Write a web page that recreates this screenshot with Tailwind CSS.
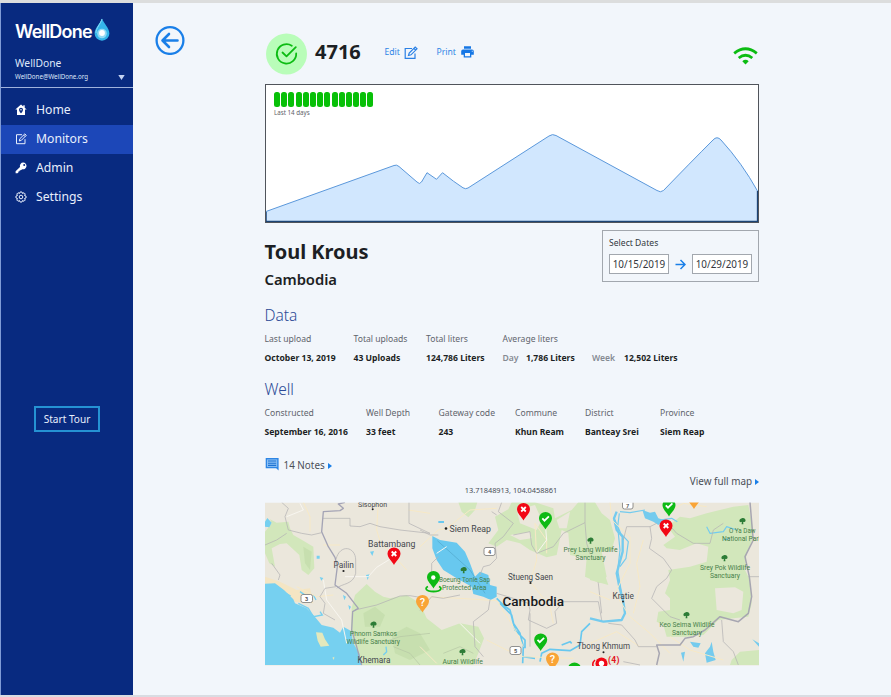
<!DOCTYPE html>
<html lang="en">
<head>
<meta charset="utf-8">
<title>WellDone Monitor</title>
<script src="https://cdn.jsdelivr.net/npm/@tailwindcss/browser@4"></script>
</head>
<body class="w-[891px] h-[697px] overflow-hidden bg-[#f2f6fb] font-['Noto_Sans','Open_Sans',sans-serif] text-[#1c1f24]">
<div class="flex flex-col w-[891px] h-[697px]">
  <div class="h-[3px] bg-[#dcdddd] shrink-0"></div>
  <div class="flex h-[692px] shrink-0">
    <aside class="w-[133px] border-l border-[#7f9bd6] bg-[#082a80] text-[#dfe8fa] flex flex-col shrink-0">
      <div class="h-[84px] flex flex-col pl-[14px] pt-[14px] shrink-0">
        <div class="flex h-7">
          <div class="w-[78px] pt-[4px] font-['Inter',sans-serif] font-semibold text-[18px] leading-[22px] tracking-[-0.8px] text-white">WellDone</div>
          <svg class="w-[17px] h-[26px] shrink-0" viewBox="0 0 17 26"><path d="M9 1.500C10.500 6 16.400 11 16.400 16.500A7.400 7.200 0 0 1 1.600 16.500C1.600 11 7.500 6 9 1.500Z" fill="#35b5ea"/><path d="M9 2C7.500 7 3 11 3 16" fill="none" stroke="#8bdcf5" stroke-width="1"/><circle cx="9" cy="16.500" r="4.800" fill="#93daf5"/><circle cx="9" cy="16" r="2.900" fill="#fff"/></svg>
        </div>
        <div class="mt-[11px] text-[10.300px] leading-[14px]">WellDone</div>
        <div class="flex items-center justify-between pr-[8px] h-[13px]">
          <span class="text-[6.200px] leading-[10px]">WellDone@WellDone.org</span>
          <svg class="w-[7px] h-[5px] mt-px" viewBox="0 0 7 5"><path d="M0.300 0H6.700L3.500 5Z" fill="#c5d3f2"/></svg>
        </div>
      </div>
      <nav class="border-t border-[#9fb2dc] pt-[8px] h-[126px] text-[12.200px] leading-none text-[#e8effc] shrink-0">
        <div class="flex items-center h-[29px] pl-[14px] gap-[9px] pb-px"><svg class="w-3 h-3" viewBox="0 0 12 12"><path fill="#fff" fill-rule="evenodd" d="M6 .5L.3 5.500H2V11H10V5.500H11.700L9.700 3.700V1.200H8.300V2.500ZM6 3.800A2 2 0 0 1 8 5.800C8 7.200 6 9.500 6 9.500S4 7.200 4 5.800A2 2 0 0 1 6 3.800ZM6 5A.8.8 0 1 0 6 6.600A.8.8 0 0 0 6 5Z"/></svg>Home</div>
        <div class="flex items-center h-[29px] pl-[14px] gap-[9px] pb-px bg-[#1c47b8]"><svg class="w-3 h-3" viewBox="0 0 12 12" fill="none" stroke="#e8effc" stroke-width="1"><path d="M7 1.700H1.500V10.700H10V6.200M4.300 8L4.800 5.800L9.800.9L11.300 2.300L6.400 7.300ZM8.600 2L10.100 3.500"/></svg>Monitors</div>
        <div class="flex items-center h-[29px] pl-[14px] gap-[9px] pb-px"><svg class="w-3 h-3" viewBox="0 0 12 12"><path fill="#fff" fill-rule="evenodd" d="M8.200.5A3.400 3.400 0 1 1 7.300 7.200L5.800 8.300L4.800 8.200L4.600 9.200L3.600 9.200L3.500 10.200L2.500 11.200H.6V9.300L5 4.900A3.400 3.400 0 0 1 8.200.5ZM9.200 1.900A1 1 0 1 0 9.201 3.900A1 1 0 0 0 9.200 1.900Z"/></svg>Admin</div>
        <div class="flex items-center h-[29px] pl-[14px] gap-[9px] pb-px"><svg class="w-3 h-3" viewBox="0 0 24 24" fill="none" stroke="#e8effc" stroke-width="2"><path d="M10 2H14L15 5L18 3.500L20.500 6L19 9L22 10V14L19 15L20.500 18L18 20.500L15 19L14 22H10L9 19L6 20.500L3.500 18L5 15L2 14V10L5 9L3.500 6L6 3.500L9 5Z"/><circle cx="12" cy="12" r="3.600"/></svg>Settings</div>
      </nav>
      <button class="mt-[193px] ml-[33px] w-[66px] h-[26px] border-2 border-[#2592d3] text-[10.100px] leading-none text-[#e8effc] shrink-0 whitespace-nowrap">Start Tour</button>
    </aside>
    <main class="flex grow">
      <div class="w-[132px] pl-[22px] pt-[22px] shrink-0">
        <svg class="w-[30px] h-[30px]" viewBox="0 0 30 30" fill="none" stroke="#1a7fe8" stroke-linecap="round" stroke-linejoin="round"><circle cx="15" cy="15.500" r="13.400" stroke-width="2.300"/><path d="M22.500 15.500H8M14 9L7.500 15.500L14 22" stroke-width="2.600"/></svg>
      </div>
      <div class="w-[494px] flex flex-col">
        <header class="h-[81px] flex items-center pt-[20px] shrink-0">
          <svg class="w-[42px] h-[42px] shrink-0" viewBox="0 0 42 42"><circle cx="21.500" cy="21" r="20.500" fill="#b9fdb9"/><g fill="none" stroke="#0cbc12" stroke-width="1.800" stroke-linecap="round" stroke-linejoin="round"><path d="M26.800 12.700A9.700 9.700 0 1 0 31.200 20.500"/><path d="M17.500 19.500L21.500 23.300L30.800 14.200"/></g></svg>
          <div class="w-[69.500px] pl-[8px] pb-[3px] text-[20px] font-bold leading-none">4716</div>
          <div class="w-[52px] pl-[8px] flex items-center gap-[4px] pb-[2px] text-[8.600px] text-[#2f86e6]">Edit <svg class="w-[14px] h-[14px] shrink-0" viewBox="0 0 14 14" fill="none" stroke="#2a80e5" stroke-width="1.200"><path d="M8 2.500H1.200V12.300H11V7.500M4.500 9.500L5.200 7L11.200 1L13 2.800L7 8.800ZM9.800 2.400L11.600 4.200"/></svg></div>
          <div class="pl-[8px] flex items-center gap-[5px] pb-[2px] text-[8.600px] text-[#2f86e6]">Print <svg class="w-[13px] h-[12px] shrink-0" viewBox="0 0 13 12"><path fill="#1677e5" fill-rule="evenodd" d="M3 .3H10V2.800H3ZM2 3.400H11A1.800 1.800 0 0 1 12.800 5.200V8.800H10.300V11.500H2.700V8.800H.2V5.200A1.800 1.800 0 0 1 2 3.400ZM4 7V10.300H9V7ZM10.800 4.700V5.700H11.700V4.700Z"/></svg></div>
          <svg class="ml-auto mr-[1px] w-[25px] h-[18px] mt-[5px]" viewBox="0 0 25 18"><g fill="none" stroke="#0cbc12" stroke-width="2.800"><path d="M1.200 6.300Q12.500-2.800 23.800 6.300"/><path d="M5.700 11Q12.500 5.500 19.300 11"/></g><path d="M9.300 14.200Q12.500 11.500 15.700 14.200L12.500 17.500Z" fill="#0cbc12"/></svg>
        </header>
        <section class="h-[139px] bg-white border border-[#50545b] flex flex-col shrink-0">
          <div class="h-[33px] pl-[8px] pt-[7px] shrink-0">
            <div class="flex gap-[1.200px]">
              <i class="w-[6px] h-[15px] rounded-[2.500px] bg-[#08c008]"></i><i class="w-[6px] h-[15px] rounded-[2.500px] bg-[#08c008]"></i><i class="w-[6px] h-[15px] rounded-[2.500px] bg-[#08c008]"></i><i class="w-[6px] h-[15px] rounded-[2.500px] bg-[#08c008]"></i><i class="w-[6px] h-[15px] rounded-[2.500px] bg-[#08c008]"></i><i class="w-[6px] h-[15px] rounded-[2.500px] bg-[#08c008]"></i><i class="w-[6px] h-[15px] rounded-[2.500px] bg-[#08c008]"></i><i class="w-[6px] h-[15px] rounded-[2.500px] bg-[#08c008]"></i><i class="w-[6px] h-[15px] rounded-[2.500px] bg-[#08c008]"></i><i class="w-[6px] h-[15px] rounded-[2.500px] bg-[#08c008]"></i><i class="w-[6px] h-[15px] rounded-[2.500px] bg-[#08c008]"></i><i class="w-[6px] h-[15px] rounded-[2.500px] bg-[#08c008]"></i><i class="w-[6px] h-[15px] rounded-[2.500px] bg-[#08c008]"></i><i class="w-[6px] h-[15px] rounded-[2.500px] bg-[#08c008]"></i>
            </div>
            <div class="text-[6.200px] leading-[12px] text-[#5d6168]">Last 14 days</div>
          </div>
          <svg class="w-[492px] h-[104px] shrink-0" viewBox="266 118 492 104"><path d="M266 211.500L394 165.500Q396.500 164.300 399 166.500L417 182Q419.500 185 421.500 182L427 172.700L436.500 179.300L442.500 172.700Q454 182 463 187.800Q465.500 189.500 468 188L549 136Q552.500 133.500 556 135.500L657 190.500Q660.500 193 663.500 190.500Q690 163 713 140Q717 135.500 721 140Q742 163 757.500 191V222H266Z" fill="#d1e7fe" stroke="#5b98db" stroke-width="1"/><path d="M266 212V221.500H757.500V191" fill="none" stroke="#1c4475" stroke-width="1.300"/></svg>
        </section>
        <section class="h-[79px] flex justify-between shrink-0">
          <div class="pt-[14px] -ml-[0.500px]">
            <h1 class="text-[20px] leading-[30px] font-bold">Toul Krous</h1>
            <h2 class="mt-px text-[14.800px] leading-[22px] font-semibold tracking-[-0.050px]">Cambodia</h2>
          </div>
          <div class="mt-[7px] w-[157px] h-[52px] border border-[#a2a7ae] pl-[6px] pt-[6px]">
            <div class="text-[8.600px] leading-[13px] text-[#33373d]">Select Dates</div>
            <div class="flex items-center justify-between mt-[4px] w-[143px]">
              <div class="w-[60px] h-[20px] border border-[#a2a7ae] bg-white text-[9.900px] leading-[19px] text-center text-[#33373d]">10/15/2019</div>
              <svg class="w-[11px] h-[11px]" viewBox="0 0 11 11" fill="none" stroke="#1a7fe8" stroke-width="1.500"><path d="M.5 5.500H10M5.500 1L10 5.500L5.500 10"/></svg>
              <div class="w-[60px] h-[20px] border border-[#a2a7ae] bg-white text-[9.900px] leading-[19px] text-center text-[#33373d]">10/29/2019</div>
            </div>
          </div>
        </section>
        <section class="h-[73px] pt-[3px] -ml-[0.500px] shrink-0">
          <h3 class="text-[15.500px] leading-[20px] font-light text-[#2c4a96]">Data</h3>
          <div class="flex text-[8.600px] leading-[12px] mt-[8px] whitespace-nowrap">
            <div class="w-[89px]"><div class="text-[#5f646c]">Last upload</div><div class="mt-[7px] font-bold">October 13, 2019</div></div>
            <div class="w-[72.500px]"><div class="text-[#5f646c]">Total uploads</div><div class="mt-[7px] font-bold">43 Uploads</div></div>
            <div class="w-[76.500px]"><div class="text-[#5f646c]">Total liters</div><div class="mt-[7px] font-bold">124,786 Liters</div></div>
            <div><div class="text-[#5f646c]">Average liters</div><div class="mt-[7px] font-bold flex"><span class="w-[23.500px] text-[#858a92] font-semibold">Day</span><span class="w-[66px]">1,786 Liters</span><span class="w-[32px] text-[#858a92] font-semibold">Week</span><span>12,502 Liters</span></div></div>
          </div>
        </section>
        <section class="h-[74px] pt-[4px] -ml-[0.500px] shrink-0">
          <h3 class="text-[15.500px] leading-[20px] font-light text-[#2c4a96]">Well</h3>
          <div class="flex text-[8.600px] leading-[12px] mt-[7.500px] whitespace-nowrap">
            <div class="w-[101.500px]"><div class="text-[#5f646c]">Constructed</div><div class="mt-[7px] font-bold">September 16, 2016</div></div>
            <div class="w-[72.500px]"><div class="text-[#5f646c]">Well Depth</div><div class="mt-[7px] font-bold">33 feet</div></div>
            <div class="w-[76.500px]"><div class="text-[#5f646c]">Gateway code</div><div class="mt-[7px] font-bold">243</div></div>
            <div class="w-[70px]"><div class="text-[#5f646c]">Commune</div><div class="mt-[7px] font-bold">Khun Ream</div></div>
            <div class="w-[75px]"><div class="text-[#5f646c]">District</div><div class="mt-[7px] font-bold">Banteay Srei</div></div>
            <div><div class="text-[#5f646c]">Province</div><div class="mt-[7px] font-bold">Siem Reap</div></div>
          </div>
        </section>
        <section class="h-[53px] grid grid-cols-3 text-[9.900px] text-[#4a4f57] leading-[14px] shrink-0">
          <div class="flex items-center h-[14px] mt-[9px]"><svg class="w-[14px] h-[14px] mr-[4.500px] -mt-[2px]" viewBox="0 0 14 14"><path d="M.7 1H13.600V13.500L11.200 11.200H.7Z" fill="#2e86e4"/><path d="M2 2.400H12.200V9.900H2Z" fill="#8dc0f4"/><path d="M3 4H11.200M3 6.200H11.200M3 8.400H11.200" stroke="#1d73d2" stroke-width="1.100"/></svg>14 Notes<svg class="w-[4px] h-[6px] ml-[3px] mt-px" viewBox="0 0 4 6"><path d="M0 0L4 3L0 6Z" fill="#1a7fe8"/></svg></div>
          <div class="self-end text-center text-[7.400px] leading-[12px] mb-[6px] pr-[2px]">13.71848913, 104.0458861</div>
          <div class="flex items-center justify-end h-[14px] mt-[25px]">View full map<svg class="w-[4px] h-[6px] ml-[3px] mt-px" viewBox="0 0 4 6"><path d="M0 0L4 3L0 6Z" fill="#1a7fe8"/></svg></div>
        </section>
        <svg class="w-[494px] h-[164px] shrink-0 font-['Roboto',sans-serif]" viewBox="265 502 494 164">
          <defs>
            <symbol id="tree" viewBox="0 0 8 8" overflow="visible"><path d="M4 .5C6 .2 7.500 2 7 3.500C6.500 4.800 5 4.600 4.700 4.300L4.900 6.700H3.100L3.400 4.300C2.500 5 .7 4.600 .9 3.200C1 2 2.200 .8 4 .5Z" fill="#2c7c36"/></symbol>
            <g id="pin"><path d="M0 0C-2-4-6.500-7-6.500-11.500A6.500 6 0 0 1 6.500-11.500C6.500-7 2-4 0 0Z"/></g>
            <g id="bad"><use href="#pin" fill="#f20816"/><path d="M-2.300-13.500L2.300-9M2.300-13.500L-2.300-9" stroke="#fff" stroke-width="1.800"/></g>
            <g id="ok"><use href="#pin" fill="#0dba14"/><path d="M-3.200-11.200L-1-8.900L3.400-13.200" fill="none" stroke="#fff" stroke-width="1.800"/></g>
            <g id="ask"><use href="#pin" fill="#f9a436"/><text x="0" y="-6.800" text-anchor="middle" font-size="11" font-weight="500" fill="#fff">?</text></g>
          </defs>
          <rect x="265" y="502.500" width="494" height="163" fill="#ebe7dc"/>
          <!-- western provinces and gulf coast -->
          <g transform="translate(260 480) scale(.33333)" fill="none">
            <path fill="#d2e7bb" d="M15 155L35 130L30 118L50 128L85 125L90 145L100 165L130 182L160 200L163 265L145 285L125 270L118 225L80 190L60 192L35 205L45 260L28 250L15 220ZM275 385L285 345L320 312L345 335L370 350L390 355L440 345L480 370L500 415L545 450L600 430L655 440L672 475L655 520L640 555H305L285 500L272 460Z"/>
            <path fill="#c0dba6" opacity=".6" d="M310 400L345 380L375 405L360 440L315 440ZM395 465L440 440L480 460L510 510L450 540L405 520ZM130 200L155 215L150 270L135 250Z"/>
            <path fill="#f4e5c3" d="M15 290L60 305L110 330L150 325L160 370L105 365L75 345L45 312H15Z"/>
            <path fill="#76d0f0" d="M15 311L45 310L72 330L100 358L105 370L140 385L160 405L185 435L220 443L240 458L250 440L272 452L280 490L298 520L305 555H15Z"/>
            <path fill="#e3e8bc" d="M168 457L187 458L195 478L208 497L182 500L173 482ZM217 533L223 530L222 540Z"/>
            <path fill="#76d0f0" d="M15 125L22 114L35 128L28 142L15 140ZM330 215L342 213L337 228ZM170 227H179V236H170ZM179 291L190 294L184 302ZM318 285L329 283L323 300ZM249 345L258 350L253 361ZM265 375L273 380L268 390Z"/>
            <path stroke="#76d0f0" stroke-width="4" d="M78 340L92 348M115 370L145 385L160 410L187 405L180 395M120 335L145 352M160 345L168 360M378 500L380 515L370 525"/>
            <g stroke="#f7e9c6" stroke-width="3"><path d="M130 67L150 110V155M355 67L350 150L362 190L400 225L440 270M445 90L510 100M190 195H240M110 320L170 350L220 345"/></g>
            <path stroke="#f8f6f0" stroke-width="3" d="M402 230L350 262L325 290H255M80 110L130 90L120 70M190 300L200 360L245 420L260 490"/>
            <g stroke="#b3b2b3" stroke-width="2.200" stroke-linejoin="round"><path d="M65 67L85 85L75 110L85 150L125 160L155 165L185 158M188 115H270V138L300 140L330 130L360 140L420 150L510 160M447 67V130L510 160M15 195L50 180L80 160M35 250L60 285L55 300M285 390L350 375L420 348L450 347L480 352M228 320L195 325L180 350L195 370L190 400L225 420M228 238C240 190 287 200 287 240V280C280 315 245 310 230 325"/></g>
            <path stroke="#b5c5a4" stroke-width="2" d="M360 490L420 470L510 460M400 500L450 520L480 555M550 520L600 500L640 520"/>
            <path stroke="#a4a4b5" stroke-width="4" stroke-linejoin="round" d="M255 67L235 72L250 85L240 92L190 95L185 155L205 200L225 232L232 260L225 315L260 340L295 385L278 395L275 450L290 500L305 555"/>
          </g>
          <!-- lake, river basin and central plains -->
          <g transform="translate(420 480) scale(.33333)" fill="none">
            <path fill="#d2e7bb" d="M115 67H172L165 90L145 112L125 95ZM205 190L235 150L225 110L265 88L275 67H345L400 85L405 115L455 90L475 67H525L545 100L570 120L585 175L575 210L545 215L560 290L540 310L495 290L500 235L450 225L445 160L425 150L410 225L380 232L330 210L300 190L260 180L230 200Z"/>
            <path fill="#ebe7dc" d="M290 90L345 75L365 120L350 150L300 130ZM270 165L330 155L335 175L300 180ZM410 120L450 95L440 145L418 145Z"/>
            <path fill="#68c8ef" d="M37 168L60 180L110 188L135 215L150 250L165 290L180 275L205 285L210 315L230 320V350L212 360L190 350L160 342L155 320L110 295L70 270L50 240L37 205ZM55 123H72V129H55Z"/>
            <path stroke="#50a6ca" stroke-width="2" d="M52 182L100 225L150 270L195 340"/>
            <path stroke="#68c8ef" stroke-width="5" stroke-linejoin="round" d="M230 355L250 375L270 390L280 430L300 460L310 500L308 550M240 370L275 405L285 450L315 480L315 505M360 545L365 520L390 508L450 512L480 495L485 455L510 430M425 495L450 485L455 490M310 530L345 535"/>
            <g stroke="#f7e9c6" stroke-width="3"><path d="M0 200L55 150L80 145L150 90L230 85M10 350L120 355L230 362L280 440L310 500M330 310L350 240L345 130L380 180V220M335 310L390 380L400 430M200 480L260 510L310 530L460 535M0 500L50 550"/></g>
            <path stroke="#f8f6f0" stroke-width="3" d="M50 220L80 200M375 120L380 180L350 220M120 430L180 490"/>
            <g stroke="#b3b2b3" stroke-width="2.200" stroke-linejoin="round"><path d="M0 150L30 165H55M245 67L235 95L280 130L250 170L225 190L230 235L210 255L190 260L180 285M55 230L35 250V285M215 95L230 105M280 165L330 155L335 195L350 220L400 200L430 160L495 128V67M495 128L500 190L520 250L535 310L545 400M210 360L205 390L160 425L165 500L190 530M230 340L280 355L325 370L330 390L325 420L380 445L410 430L405 395L430 365H510M0 392L35 350L70 355L120 345M330 400L330 500"/></g>
          </g>
          <!-- Mekong and eastern sanctuaries -->
          <g transform="translate(590 470) scale(.33333)" fill="none">
            <path fill="#d2e7bb" d="M0 155L35 170L65 190L70 240L25 245L45 315L55 345L0 330ZM245 160L270 140L300 145L350 130L430 110L475 105L490 180L485 215L470 250L465 300L480 330L485 400L475 440L430 445L385 450L340 495L290 500L230 500L220 465L200 455L205 425L240 420V385L225 370L240 330L235 300L300 290L350 275L355 230L320 220L270 240L230 235L220 225L255 200L240 180ZM425 570L450 545L507 540V585H420Z"/>
            <path fill="#ebe7dc" d="M375 355L435 352L460 365L455 420L430 430L380 420Z"/>
            <path fill="#74cbee" d="M157 120L180 128L195 125L205 145L222 150L205 165L190 155L165 145ZM300 515L332 520L325 533L310 530ZM345 550L360 530L365 515L370 545L377 570L350 578ZM273 548L285 545L280 575ZM487 508L507 520V530Z"/>
            <path stroke="#74cbee" stroke-width="7" stroke-linejoin="round" d="M80 125L72 145L80 180L98 200V245L80 310L88 350L100 395L105 430L95 450L40 455L0 445"/>
            <path stroke="#74cbee" stroke-width="3.500" stroke-linejoin="round" d="M90 125L120 128L165 120M75 150L92 190L115 215L108 265L90 290M88 130L83 170L90 240L83 300L95 370M350 170L360 190L400 185L410 170L440 180M210 150L245 145L262 155M400 210L420 205"/>
            <g stroke="#f7e9c6" stroke-width="3"><path d="M60 96L65 150L120 200V280L75 370L120 440L180 490L240 550M160 210L140 280L150 350L130 430M0 520L80 485L150 530M240 500L300 540L400 570M230 130L280 100L350 110M0 365L60 390"/></g>
            <g stroke="#b3b2b3" stroke-width="2.200" stroke-linejoin="round"><path d="M100 210L110 170H180L200 160M180 170L185 205L178 235L220 265L245 300L230 325L200 350L185 385L240 440L270 450M225 150L260 190L310 220L360 220L370 180L400 160M0 395H25L35 450M55 460L95 465L135 510L145 530H200M475 320H507M395 450L400 515L430 545L445 585M100 575L150 585"/></g>
            <path stroke="#a7a6b1" stroke-width="4.500" stroke-linejoin="round" d="M480 96L487 180L490 210L465 260L478 320L485 380L475 430L445 455L390 440L345 480L310 500L285 505L270 525L200 525L208 550L200 585"/>
          </g>
          <g fill="#fff" stroke="#777" stroke-width=".8"><rect x="301" y="594.500" width="11.500" height="8" rx="2"/><rect x="484" y="547.500" width="11" height="8" rx="2"/><rect x="510" y="646.500" width="11" height="8" rx="2"/><path d="M622.500 502.500V507Q622.500 509 624.500 509H631Q633 509 633 507V502.500"/></g>
          <g font-size="5.500" font-weight="700" fill="#555" text-anchor="middle"><text x="306.700" y="600.500">3</text><text x="489.500" y="553.500">4</text><text x="515.500" y="652.500">5</text><text x="627.700" y="507.500">7</text></g>
          <g fill="#45484d" font-size="8.600">
            <text x="358" y="506.500" font-size="8" textLength="29" lengthAdjust="spacingAndGlyphs">Sisophon</text>
            <text x="368" y="546.500" textLength="47.500" lengthAdjust="spacingAndGlyphs">Battambang</text>
            <text x="333.500" y="567.500" textLength="20.500" lengthAdjust="spacingAndGlyphs">Pailin</text>
            <text x="357.500" y="662.800" textLength="33" lengthAdjust="spacingAndGlyphs">Khemara</text>
            <text x="449.500" y="532" textLength="41.500" lengthAdjust="spacingAndGlyphs">Siem Reap</text>
            <text x="508" y="579.500" textLength="45" lengthAdjust="spacingAndGlyphs">Stueng Saen</text>
            <text x="612.500" y="598.500" font-size="8.300" textLength="21.500" lengthAdjust="spacingAndGlyphs">Kratie</text>
            <text x="577" y="648.500" textLength="53" lengthAdjust="spacingAndGlyphs">Tbong Khmum</text>
            <text x="502.500" y="605.800" font-size="13.200" font-weight="500" fill="#17191b" textLength="61.500" lengthAdjust="spacingAndGlyphs">Cambodia</text>
          </g>
          <g fill="#222"><circle cx="372.700" cy="509.300" r="1"/><circle cx="343.500" cy="571" r="1.100"/><circle cx="446" cy="528.500" r="1.300"/><circle cx="530.500" cy="583" r="1.100"/><circle cx="623" cy="601.500" r="1"/><circle cx="603.500" cy="652.300" r="1"/></g>
          <g font-size="6.600" fill="#47804a">
            <text x="350" y="636" textLength="47" lengthAdjust="spacingAndGlyphs">Phnom Samkos</text><text x="346.500" y="644.300" textLength="53.500" lengthAdjust="spacingAndGlyphs">Wildlife Sanctuary</text>
            <text x="439" y="581.500" textLength="51" lengthAdjust="spacingAndGlyphs">Boeung Tonle Sap</text><text x="442" y="589.800" textLength="44.500" lengthAdjust="spacingAndGlyphs">Protected Area</text>
            <text x="442.500" y="663.500" textLength="40.500" lengthAdjust="spacingAndGlyphs">Aural Wildlife</text>
            <text x="563.500" y="552" textLength="54" lengthAdjust="spacingAndGlyphs">Prey Lang Wildlife</text><text x="575.500" y="560.300" textLength="30" lengthAdjust="spacingAndGlyphs">Sanctuary</text>
            <text x="729" y="533" textLength="26.500" lengthAdjust="spacingAndGlyphs">O Ya Daw</text><text x="722" y="541" textLength="40" lengthAdjust="spacingAndGlyphs">National Park</text>
            <text x="700" y="569.500" textLength="50" lengthAdjust="spacingAndGlyphs">Srey Pok Wildlife</text><text x="710" y="578" textLength="30" lengthAdjust="spacingAndGlyphs">Sanctuary</text>
            <text x="659.500" y="626.500" textLength="55" lengthAdjust="spacingAndGlyphs">Keo Seima Wildlife</text><text x="672" y="634.800" textLength="30" lengthAdjust="spacingAndGlyphs">Sanctuary</text>
          </g>
          <use href="#tree" x="369.500" y="621" width="8" height="8"/><use href="#tree" x="459.700" y="566.500" width="8" height="8"/><use href="#tree" x="458.500" y="648.500" width="8" height="8"/><use href="#tree" x="586.500" y="537" width="8" height="8"/><use href="#tree" x="738.500" y="517.500" width="8" height="8"/><use href="#tree" x="720.500" y="554.500" width="8" height="8"/><use href="#tree" x="682.500" y="611.500" width="8" height="8"/>
          <use href="#bad" x="394" y="565"/><use href="#bad" x="523.500" y="520.500"/><use href="#ask" x="422.500" y="612.500"/><use href="#ok" x="545.500" y="529.500"/><use href="#ok" x="540.700" y="651"/><use href="#ask" x="552.500" y="670"/><use href="#ok" x="669" y="516.500"/><use href="#bad" x="666" y="537"/><use href="#pin" x="694" y="509" fill="#f9a436"/><use href="#pin" x="574.500" y="680" fill="#0dba14"/>
          <path d="M428 586.500C424.500 588 425.500 591.500 433.500 591.500S442.500 588 439 586.500" fill="none" stroke="#0dba14" stroke-width="1.800"/><use href="#pin" x="433.500" y="588.500" fill="#0dba14"/><circle cx="433.300" cy="577.500" r="2.200" fill="#fff"/>
          <circle cx="601.500" cy="663.500" r="6" fill="#f20816"/><circle cx="601.500" cy="663.500" r="2.700" fill="#fff"/><path d="M595 660Q591.500 663 593.500 667" fill="none" stroke="#f20816" stroke-width="1.500"/>
          <text x="608" y="663" font-size="8.500" font-weight="700" fill="#e21522" textLength="11.500">(4)</text>
          <path d="M265 502H759" stroke="#f2f6fb" stroke-width="1"/>
        </svg>
      </div>
    </main>
  </div>
  <div class="h-[2px] bg-[#d9dce2] shrink-0"></div>
</div>
</body>
</html>
